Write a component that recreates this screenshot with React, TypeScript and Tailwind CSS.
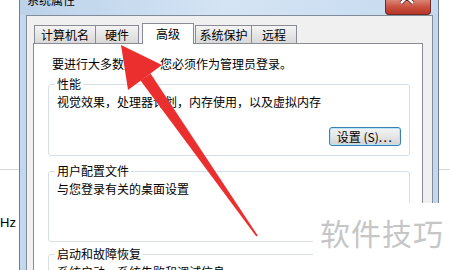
import type { ReactNode } from "react"

function Tab({ label, active, className }: { label: string; active?: boolean; className: string }) {
  if (active) {
    return (
      <div
        className={`relative z-10 -mb-px flex h-[21px] items-center justify-center border border-b-0 border-[#898c95] bg-white ${className}`}
      >
        {label}
      </div>
    )
  }
  return (
    <div
      className={`flex h-[18px] items-center justify-center border border-b-0 border-[#898c95] bg-gradient-to-b from-[#f4f4f4] to-[#d9d9d9] ${className}`}
    >
      {label}
    </div>
  )
}

function Group({ title, className, children }: { title: string; className: string; children: ReactNode }) {
  return (
    <fieldset className={`rounded-[3px] border border-[#d5dfe5] px-[8px] ${className}`}>
      <legend className="-ml-[2px] px-[2px]">{title}</legend>
      {children}
    </fieldset>
  )
}

function CloseButton() {
  return (
    <div className="mr-[7px] ml-auto h-[15px] w-[46px] overflow-hidden rounded-b-[4px] border border-t-0 border-[#6e2b22] bg-gradient-to-b from-[#d98576] via-[#c9503f] to-[#b8372a]">
      <svg width="46" height="15" viewBox="0 0 46 15">
        <path d="M15 -8 L27 3 M27 -8 L15 3" stroke="#5a1a14" strokeWidth="4" />
        <path d="M15 -8 L27 3 M27 -8 L15 3" stroke="#ffffff" strokeWidth="2.4" />
      </svg>
    </div>
  )
}

export default function App() {
  return (
    <div className="relative flex h-[270px] w-[450px] items-start overflow-hidden bg-white font-['Noto_Sans_CJK_SC',sans-serif] text-[12px] leading-[16px] text-black">
      {/* what is left of the page behind the dialog */}
      <div className="flex w-[19px] shrink-0 flex-col">
        <div className="mt-[169px] h-px bg-[#d6d6d6]" />
        <div className="mt-[45px] font-['Liberation_Sans',Arial,sans-serif] text-[13px]">Hz</div>
      </div>

      {/* dialog window */}
      <div className="flex h-[320px] w-[420px] shrink-0 flex-col border-x border-[#6f7f90] bg-[#c3d7ee]">
        <div className="flex h-[15px] shrink-0 items-start bg-gradient-to-r from-[#bcd2ea] via-[#d4e4f4] to-[#c6daef]">
          <span className="-mt-[8px] ml-[7px]">系统属性</span>
          <CloseButton />
        </div>

        <div className="flex flex-1">
          <div className="w-[6px] shrink-0 bg-[#c3d7ee]" />
          <div className="flex w-[407px] shrink-0 flex-col border-x border-t border-[#7f8c9b] bg-[#f0f0f0] pt-[7px] pr-[9px]">
            <div className="flex h-[20px] items-end pl-[7px]">
              <Tab label="计算机名" className="w-[62px]" />
              <Tab label="硬件" className="-ml-px w-[44px]" />
              <Tab label="高级" active className="ml-[3px] w-[52px]" />
              <Tab label="系统保护" className="ml-px w-[57px]" />
              <Tab label="远程" className="-ml-px w-[46px]" />
            </div>

            <div className="ml-[6px] flex-1 border border-[#898c95] bg-white pt-[12px] pr-[12px] pl-[14px]">
              <div className="pl-[4px]">要进行大多数更改，您必须作为管理员登录。</div>

              <Group title="性能" className="mt-[4px] pb-[9px]">
                <div className="pt-[2px]">视觉效果，处理器计划，内存使用，以及虚拟内存</div>
                <div className="mt-[17px] flex justify-end">
                  <button className="flex h-[19px] w-[72px] items-center justify-center rounded-[3px] border border-[#3c7fb1] bg-gradient-to-b from-[#f4f4f4] via-[#e6e6e6] to-[#d2d2d2] shadow-[inset_0_0_0_1px_#b8e4f8]">
                    设置 (S)<span className="tracking-[1.5px]">...</span>
                  </button>
                </div>
              </Group>

              <Group title="用户配置文件" className="mt-[7px] pb-[44px]">
                <div className="pt-[2px]">与您登录有关的桌面设置</div>
              </Group>

              <Group title="启动和故障恢复" className="mt-[4px] pb-[40px]">
                <div className="pt-[2px]">系统启动、系统失败和调试信息</div>
              </Group>
            </div>
          </div>
          <div className="w-[5px] shrink-0 bg-[#c3d7ee]" />
        </div>
      </div>

      <div className="flex w-[11px] shrink-0 flex-col">
        <div className="mt-[169px] h-px bg-[#d6d6d6]" />
      </div>

      {/* red annotation arrow drawn over the screenshot */}
      <svg className="pointer-events-none absolute top-0 left-0" width="450" height="270" viewBox="0 0 450 270">
        <polygon points="121,45 162,65 128,90" fill="#eb2f2f" />
        <polygon points="140.5,80.5 150.5,73.5 257.7,235.5 256.3,236.5" fill="#eb2f2f" />
      </svg>

      {/* watermark */}
      <div className="absolute top-[203px] left-[313px] h-[67px] w-[137px] bg-white pt-[14px] pl-[7px] text-[30px] leading-[30px] tracking-[1px] text-[#c6c6c6]">
        软件技巧
      </div>
    </div>
  )
}
